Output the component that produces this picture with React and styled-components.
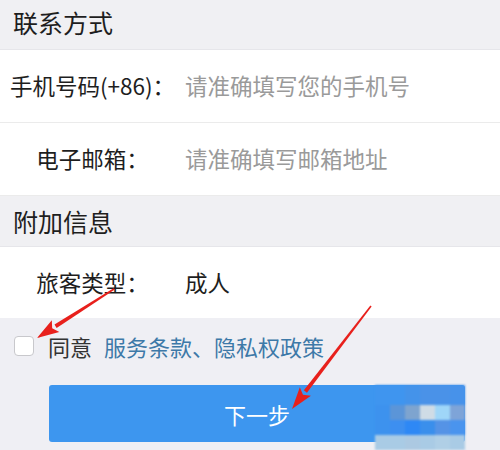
import React from 'react';
import styled, { createGlobalStyle } from 'styled-components';

const GlobalStyle = createGlobalStyle`
  html, body {
    margin: 0;
    padding: 0;
    background: #efeff4;
  }
  body {
    font-family: "Noto Sans CJK SC", "Noto Sans", sans-serif;
    color: #222;
  }
`;

const rows1 = [
  { label: '手机号码(+86)：', value: '请准确填写您的手机号', hint: true },
  { label: '电子邮箱：', value: '请准确填写邮箱地址', hint: true },
];
const rows2 = [{ label: '旅客类型：', value: '成人', hint: false }];

// pixelated watermark over the button's right end
const mosaic = [
  ['#3f95ef', '#3f95ef', '#4493ea', '#4a92e8', '#4a92e8', '#4792ea'],
  ['#3d92ee', '#5b95d8', '#7ea4cf', '#cfdce6', '#9fd6f8', '#7ea4d8'],
  ['#3d92ee', '#3d8ff0', '#2e88f5', '#3a8fec', '#5593e6', '#4a94ee'],
  ['#a9cbe5', '#a9cbe5', '#acc9e2', '#a9cbe5', '#b0cfe6', '#a9cbe5'],
];

export default function App() {
  return (
    <Page>
      <GlobalStyle />
      <SectionTitle $first>联系方式</SectionTitle>
      {rows1.map(r => (
        <Row key={r.label}>
          <Label>{r.label}</Label>
          <Value hint={r.hint}>{r.value}</Value>
        </Row>
      ))}
      <SectionTitle $tall>附加信息</SectionTitle>
      {rows2.map(r => (
        <Row key={r.label} $last>
          <Label>{r.label}</Label>
          <Value hint={r.hint}>{r.value}</Value>
        </Row>
      ))}
      <Agree>
        <Check />
        <span>同意</span>
        <Link>服务条款、隐私权政策</Link>
      </Agree>
      <NextButton>下一步</NextButton>

      <Mosaic>
        {mosaic.map((line, i) =>
          line.map((c, j) => <Cell key={i + '-' + j} style={{ background: c }} />)
        )}
      </Mosaic>

      <Arrows viewBox="0 0 500 450" width="500" height="450">
        <Arrow x1={114} y1={289} x2={37} y2={338} />
        <Arrow x1={371} y1={306} x2={292} y2={409} />
      </Arrows>
    </Page>
  );
}

function Arrow({ x1, y1, x2, y2 }) {
  const dx = x2 - x1;
  const dy = y2 - y1;
  const len = Math.hypot(dx, dy);
  const ux = dx / len;
  const uy = dy / len;
  const nx = -uy;
  const ny = ux;
  const head = 22;
  const hw = 7;
  const bx = x2 - ux * head;
  const by = y2 - uy * head;
  const shaft = [
    [x1 + nx * 0.8, y1 + ny * 0.8],
    [bx + nx * 2, by + ny * 2],
    [bx - nx * 2, by - ny * 2],
    [x1 - nx * 0.8, y1 - ny * 0.8],
  ];
  const tip = [
    [x2, y2],
    [bx + nx * hw, by + ny * hw],
    [bx + ux * 4, by + uy * 4],
    [bx - nx * hw, by - ny * hw],
  ];
  const pts = a => a.map(p => p.join(',')).join(' ');
  return (
    <g fill="#e8201c">
      <polygon points={pts(shaft)} />
      <polygon points={pts(tip)} />
    </g>
  );
}

const Page = styled.div`
  position: relative;
  width: 500px;
  height: 450px;
  overflow: hidden;
  background: #efeff4;
`;

const SectionTitle = styled.div`
  height: ${p => (p.$tall ? '51px' : '50px')};
  display: flex;
  align-items: center;
  padding: 0 0 ${p => (p.$first ? '5px' : '1px')} 13px;
  font-size: 25px;
  color: #1e1e1e;
  background: #f0f0f3;
  border-bottom: 1px solid #e6e6ea;
  box-sizing: border-box;
`;

const Row = styled.div`
  height: ${p => (p.$last ? '71px' : '73px')};
  display: flex;
  align-items: center;
  padding-bottom: 2px;
  background: #fff;
  border-bottom: ${p => (p.$last ? 'none' : '1px solid #ebebeb')};
  box-sizing: border-box;
  font-size: 22.5px;
`;

const Label = styled.div`
  width: 185px;
  flex: none;
  text-align: center;
  color: #1e1e1e;
  white-space: nowrap;
`;

const Value = styled.div.withConfig({ shouldForwardProp: p => p !== 'hint' })`
  color: ${p => (p.hint ? '#9a9a9a' : '#1e1e1e')};
  white-space: nowrap;
`;

const Agree = styled.div`
  display: flex;
  align-items: center;
  padding: 8px 0 0 14px;
  height: 40px;
  font-size: 22px;
  color: #333;

  span {
    margin-left: 14px;
  }
`;

const Check = styled.div`
  width: 18px;
  height: 18px;
  border: 1px solid #c8c8cc;
  border-radius: 4px;
  background: #fff;
  flex: none;
`;

const Link = styled.a`
  margin-left: 12px;
  color: #3d79a8;
  text-decoration: none;
`;

const NextButton = styled.div`
  margin: 19px 0 0 49px;
  width: 416px;
  height: 57px;
  border-radius: 3px;
  background: #3d96ef;
  color: #fff;
  font-size: 22px;
  display: flex;
  align-items: center;
  justify-content: center;
`;

const Mosaic = styled.div`
  position: absolute;
  left: 375px;
  top: 385px;
  display: grid;
  grid-template-columns: repeat(6, 15px);
  grid-template-rows: 20px 15px 15px 15px;
  filter: blur(1px);
`;

const Cell = styled.div``;

const Arrows = styled.svg`
  position: absolute;
  left: 0;
  top: 0;
  pointer-events: none;
`;
